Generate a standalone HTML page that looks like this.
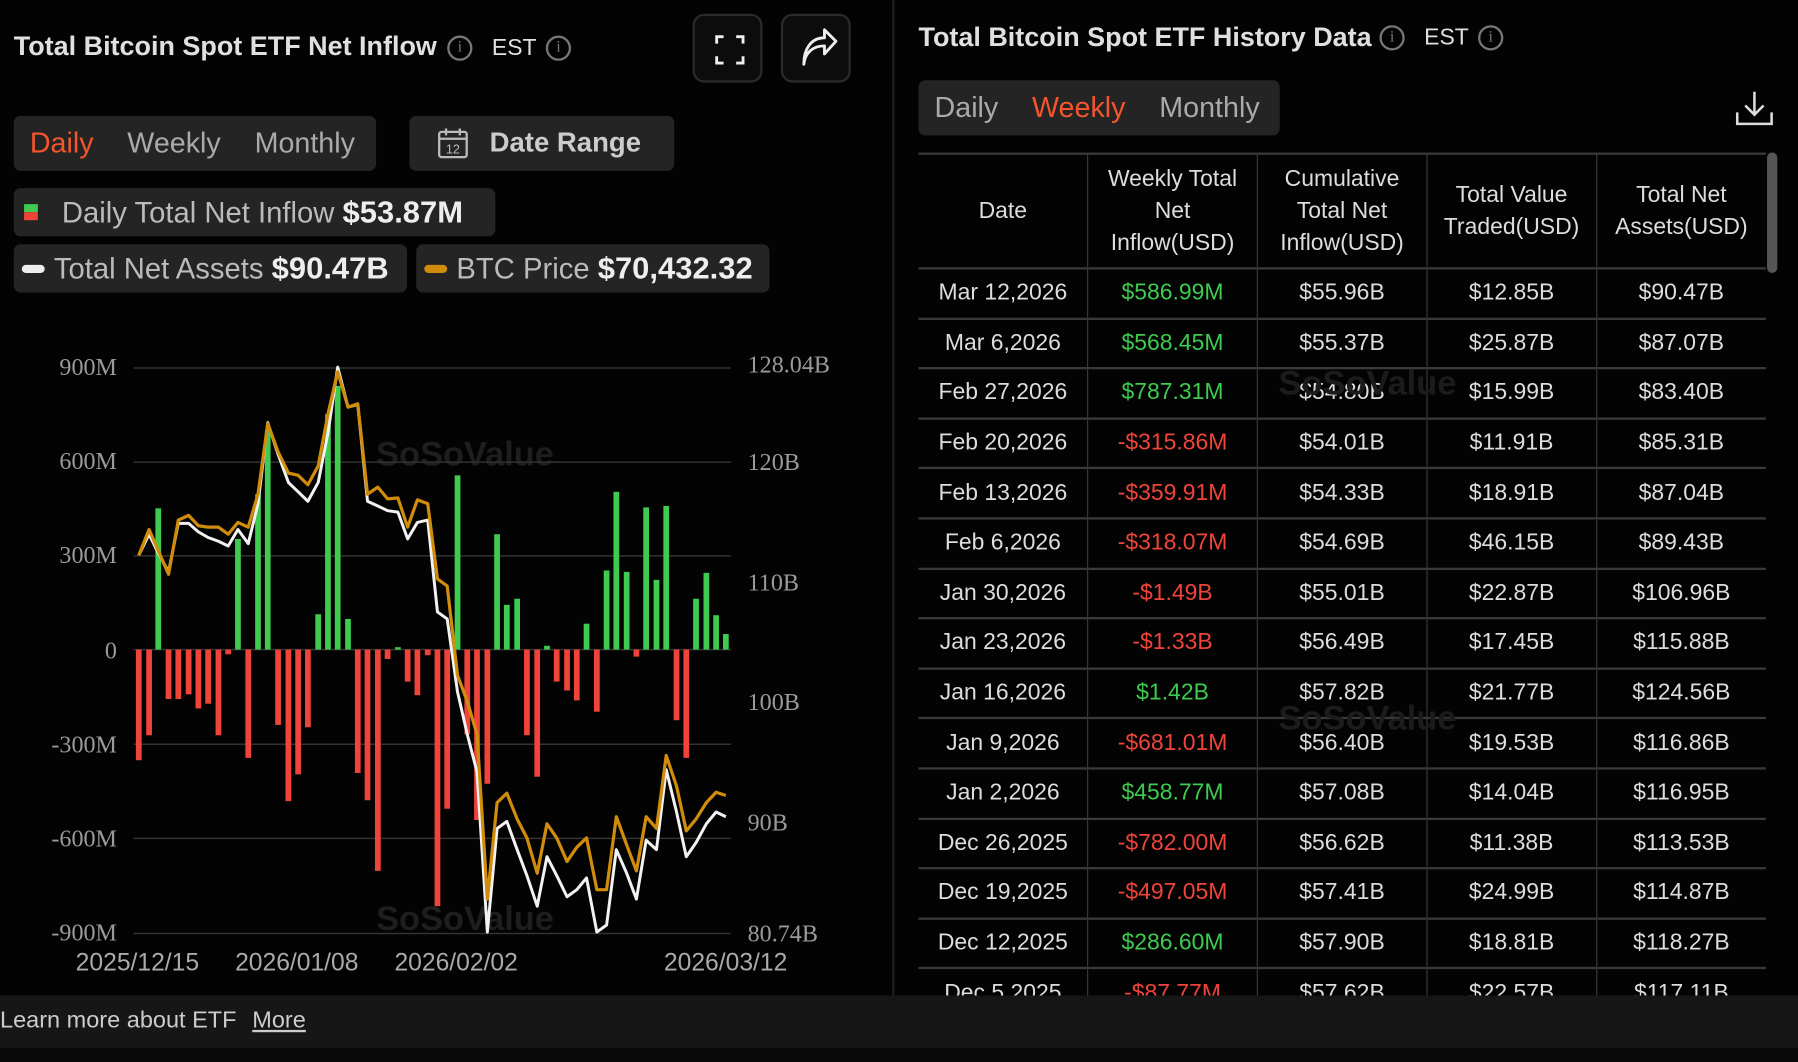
<!DOCTYPE html>
<html><head><meta charset="utf-8"><style>
*{margin:0;padding:0;box-sizing:border-box}
html,body{width:1798px;height:1062px;background:#030303;overflow:hidden}
#w{position:absolute;left:0;top:0;width:1568px;height:926px;transform:scale(1.14668,1.1469);transform-origin:0 0;font-family:"Liberation Sans",sans-serif;color:#ddd}
.a{position:absolute;white-space:nowrap}
.box{position:absolute;background:#242424;border-radius:6px}
.info{position:absolute;width:22px;height:22px;border:2px solid #777;border-radius:50%;color:#777;font-size:14px;text-align:center;line-height:18px;font-family:"Liberation Serif",serif}
.btn{position:absolute;border:2px solid #2a2a2a;border-radius:10px;background:#0c0c0c}
.tab{font-size:25px;color:#aaa}
.ax{position:absolute;font-family:"Liberation Serif",serif;font-size:21px;color:#9a9a9a}
.xl{position:absolute;font-size:21.5px;color:#aaa;top:827px}
table{position:absolute;left:801px;top:133px;border-collapse:collapse;width:739px;font-size:20px}
td,th{border-left:1px solid #3a3a3a;border-right:1px solid #3a3a3a;border-bottom:2px solid #3a3a3a;text-align:center;width:148px;height:43.6px;font-weight:normal;color:#ddd}
th{height:100px;line-height:28px;border-top:2px solid #3a3a3a}
td:first-child,th:first-child{border-left:none}
td:last-child,th:last-child{border-right:none}
.g{color:#3ecb4f}.r{color:#f0443a}
.wm{position:absolute;font-size:30px;font-weight:bold;color:#1e1e1e}
</style></head><body><div id="w">
<div class="a" style="left:12px;top:27px;font-size:23.5px;font-weight:bold;color:#e0e0e0">Total Bitcoin Spot ETF Net Inflow</div>
<div class="info" style="left:390px;top:31px">i</div>
<div class="a" style="left:429px;top:31px;font-size:20px;color:#e0e0e0">EST</div>
<div class="info" style="left:476px;top:31px">i</div>
<div class="btn" style="left:604px;top:12px;width:61px;height:60px"><svg width="61" height="60" viewBox="0 0 61 60"><path d="M19 24v-6h6M36 18h6v6M42 35v6h-6M25 41h-6v-6" stroke="#eee" stroke-width="2.5" fill="none"/></svg></div>
<div class="btn" style="left:681px;top:12px;width:61px;height:60px"><svg width="61" height="60" viewBox="0 0 61 60"><path d="M18 42c1-10 8-16 18-16v7l10-11-10-10v7c-12 0-18 10-18 23z" stroke="#eee" stroke-width="2.5" fill="none" stroke-linejoin="round"/></svg></div>
<div class="box" style="left:12px;top:101px;width:316px;height:48px"></div>
<div class="a tab" style="left:26px;top:111px;color:#f4552c">Daily</div>
<div class="a tab" style="left:111px;top:111px">Weekly</div>
<div class="a tab" style="left:222px;top:111px">Monthly</div>
<div class="box" style="left:357px;top:101px;width:231px;height:48px"></div>
<svg class="a" style="left:380px;top:110px" width="30" height="30" viewBox="0 0 30 30"><rect x="3" y="5" width="24" height="22" rx="2" stroke="#bbb" stroke-width="2" fill="none"/><path d="M3 11h24M9 2v6M21 2v6" stroke="#bbb" stroke-width="2"/><text x="15" y="24" font-size="11" fill="#bbb" text-anchor="middle" font-family="Liberation Sans">12</text></svg>
<div class="a" style="left:427px;top:111px;font-size:24px;font-weight:bold;color:#ccc">Date Range</div>
<div class="box" style="left:12px;top:164px;width:420px;height:42px"></div>
<div class="a" style="left:21px;top:178px;width:12px;height:7px;background:#3ecb4f"></div>
<div class="a" style="left:21px;top:185px;width:12px;height:7px;background:#f0443a"></div>
<div class="a" style="left:54px;top:170px;font-size:25.5px;color:#bbb">Daily Total Net Inflow <b style="color:#eee;font-size:27px">$53.87M</b></div>
<div class="box" style="left:12px;top:213px;width:343px;height:42px"></div>
<div class="a" style="left:19px;top:231px;width:20px;height:7px;border-radius:4px;background:#eee"></div>
<div class="a" style="left:47px;top:219px;font-size:25.5px;color:#bbb">Total Net Assets <b style="color:#eee;font-size:27px">$90.47B</b></div>
<div class="box" style="left:363px;top:213px;width:308px;height:42px"></div>
<div class="a" style="left:370px;top:231px;width:20px;height:7px;border-radius:4px;background:#d08c0a"></div>
<div class="a" style="left:398px;top:219px;font-size:25.5px;color:#bbb">BTC Price <b style="color:#eee;font-size:27px">$70,432.32</b></div>
<div class="ax" style="right:1466px;top:308px">900M</div>
<div class="ax" style="right:1466px;top:390px">600M</div>
<div class="ax" style="right:1466px;top:472px">300M</div>
<div class="ax" style="right:1466px;top:555px">0</div>
<div class="ax" style="right:1466px;top:637px">-300M</div>
<div class="ax" style="right:1466px;top:719px">-600M</div>
<div class="ax" style="right:1466px;top:801px">-900M</div>
<div class="ax" style="left:652px;top:306px">128.04B</div>
<div class="ax" style="left:652px;top:391px">120B</div>
<div class="ax" style="left:652px;top:496px">110B</div>
<div class="ax" style="left:652px;top:600px">100B</div>
<div class="ax" style="left:652px;top:705px">90B</div>
<div class="ax" style="left:652px;top:802px">80.74B</div>
<div class="xl" style="left:66px">2025/12/15</div>
<div class="xl" style="left:205px">2026/01/08</div>
<div class="xl" style="left:344px">2026/02/02</div>
<div class="xl" style="left:579px">2026/03/12</div>
<div class="wm" style="left:328px;top:380px">SoSoValue</div>
<div class="wm" style="left:328px;top:785px">SoSoValue</div>
<svg class="a" style="left:0;top:279px" width="784" height="647" viewBox="0 0 1568 1576" preserveAspectRatio="none">
<g stroke="#333" stroke-width="1.3">
<line x1="233" x2="1275" y1="102" y2="102" vector-effect="non-scaling-stroke"/><line x1="233" x2="1275" y1="302" y2="302" vector-effect="non-scaling-stroke"/><line x1="233" x2="1275" y1="501" y2="501" vector-effect="non-scaling-stroke"/><line x1="233" x2="1275" y1="700" y2="700" vector-effect="non-scaling-stroke"/><line x1="233" x2="1275" y1="901" y2="901" vector-effect="non-scaling-stroke"/><line x1="233" x2="1275" y1="1101" y2="1101" vector-effect="non-scaling-stroke"/><line x1="233" x2="1275" y1="1303" y2="1303" vector-effect="non-scaling-stroke"/></g>
<g id="bars"></g>
<polyline id="wl" fill="none" stroke="#f2f2f2" stroke-width="2.6" vector-effect="non-scaling-stroke" stroke-linejoin="round"/>
<polyline id="gl" fill="none" stroke="#d08c0a" stroke-width="2.8" vector-effect="non-scaling-stroke" stroke-linejoin="round"/>
</svg>
<div class="a" style="left:778px;top:0;width:2px;height:868px;background:#1e1e1e"></div>
<div class="a" style="left:801px;top:19px;font-size:23.5px;font-weight:bold;color:#e0e0e0">Total Bitcoin Spot ETF History Data</div>
<div class="info" style="left:1203px;top:22px">i</div>
<div class="a" style="left:1242px;top:22px;font-size:20px;color:#e0e0e0">EST</div>
<div class="info" style="left:1289px;top:22px">i</div>
<div class="box" style="left:801px;top:70px;width:315px;height:48px"></div>
<div class="a tab" style="left:815px;top:80px">Daily</div>
<div class="a tab" style="left:900px;top:80px;color:#f4552c">Weekly</div>
<div class="a tab" style="left:1011px;top:80px">Monthly</div>
<svg class="a" style="left:1512px;top:78px" width="36" height="32" viewBox="0 0 36 32"><path d="M18 2v20M10 14l8 8 8-8M3 20v10h30V20" stroke="#ddd" stroke-width="2.2" fill="none"/></svg>
<div class="a" style="left:1541px;top:133px;width:9px;height:105px;border-radius:5px;background:#555"></div>
<div style="position:absolute;left:0;top:0;width:1568px;height:868px;overflow:hidden">
<table>
<tr><th>Date</th><th>Weekly Total<br>Net<br>Inflow(USD)</th><th>Cumulative<br>Total Net<br>Inflow(USD)</th><th>Total Value<br>Traded(USD)</th><th>Total Net<br>Assets(USD)</th></tr>
<tr><td>Mar 12,2026</td><td class="g">$586.99M</td><td>$55.96B</td><td>$12.85B</td><td>$90.47B</td></tr>
<tr><td>Mar 6,2026</td><td class="g">$568.45M</td><td>$55.37B</td><td>$25.87B</td><td>$87.07B</td></tr>
<tr><td>Feb 27,2026</td><td class="g">$787.31M</td><td>$54.80B</td><td>$15.99B</td><td>$83.40B</td></tr>
<tr><td>Feb 20,2026</td><td class="r">-$315.86M</td><td>$54.01B</td><td>$11.91B</td><td>$85.31B</td></tr>
<tr><td>Feb 13,2026</td><td class="r">-$359.91M</td><td>$54.33B</td><td>$18.91B</td><td>$87.04B</td></tr>
<tr><td>Feb 6,2026</td><td class="r">-$318.07M</td><td>$54.69B</td><td>$46.15B</td><td>$89.43B</td></tr>
<tr><td>Jan 30,2026</td><td class="r">-$1.49B</td><td>$55.01B</td><td>$22.87B</td><td>$106.96B</td></tr>
<tr><td>Jan 23,2026</td><td class="r">-$1.33B</td><td>$56.49B</td><td>$17.45B</td><td>$115.88B</td></tr>
<tr><td>Jan 16,2026</td><td class="g">$1.42B</td><td>$57.82B</td><td>$21.77B</td><td>$124.56B</td></tr>
<tr><td>Jan 9,2026</td><td class="r">-$681.01M</td><td>$56.40B</td><td>$19.53B</td><td>$116.86B</td></tr>
<tr><td>Jan 2,2026</td><td class="g">$458.77M</td><td>$57.08B</td><td>$14.04B</td><td>$116.95B</td></tr>
<tr><td>Dec 26,2025</td><td class="r">-$782.00M</td><td>$56.62B</td><td>$11.38B</td><td>$113.53B</td></tr>
<tr><td>Dec 19,2025</td><td class="r">-$497.05M</td><td>$57.41B</td><td>$24.99B</td><td>$114.87B</td></tr>
<tr><td>Dec 12,2025</td><td class="g">$286.60M</td><td>$57.90B</td><td>$18.81B</td><td>$118.27B</td></tr>
<tr><td>Dec 5,2025</td><td class="r">-$87.77M</td><td>$57.62B</td><td>$22.57B</td><td>$117.11B</td></tr>
</table>
<div class="wm" style="left:1115px;top:318px;color:#1c1c1c">SoSoValue</div>
<div class="wm" style="left:1115px;top:610px;color:#1c1c1c">SoSoValue</div>
</div>
<div class="a" style="left:0;top:868px;width:1568px;height:46px;background:#161616"></div>
<div class="a" style="left:0;top:878px;font-size:20.5px;color:#ccc">Learn more about ETF</div>
<div class="a" style="left:220px;top:878px;font-size:20.5px;color:#ccc;text-decoration:underline">More</div>
<div class="a" style="left:0;top:914px;width:1568px;height:12px;background:#0a0a0a"></div>
</div>
<script>
var b=[[242,935],[260,882],[276,400],[294,805],[311,805],[329,795],[346,825],[363,815],[381,882],[398,710],[415,465],[433,930],[450,370],[467,235],[485,860],[503,1022],[520,965],[537,865],[555,625],[572,200],[589,140],[607,635],[624,962],[641,1020],[659,1170],[676,720],[694,695],[711,768],[728,797],[746,712],[763,1245],[780,1038],[798,330],[815,880],[832,1062],[850,985],[867,455],[884,605],[902,592],[919,882],[937,970],[954,692],[971,768],[989,787],[1006,808],[1023,645],[1041,832],[1058,532],[1075,365],[1093,535],[1110,715],[1127,398],[1145,552],[1162,395],[1180,850],[1197,930],[1214,592],[1232,537],[1249,627],[1266,667]];
var s='';b.forEach(function(p){var t=Math.min(700,p[1]),h=Math.abs(p[1]-700);s+='<rect x="'+(p[0]-5)+'" y="'+t+'" width="10" height="'+h+'" fill="'+(p[1]<700?'#3ecb4f':'#f0443a')+'"/>';});
document.getElementById('bars').innerHTML=s;
var g=[500,445,490,540,425,415,437,440,440,455,430,440,370,220,280,325,330,350,310,200,110,185,178,370,355,380,378,440,382,390,550,565,755,810,880,1230,1025,1005,1060,1100,1175,1070,1100,1150,1120,1100,1210,1210,1055,1115,1170,1055,1080,925,990,1085,1060,1025,1003,1010];
var w=[500,455,495,535,432,432,450,462,470,480,445,475,390,218,285,345,365,385,345,240,100,185,180,385,395,405,408,465,430,425,620,635,790,880,960,1300,1080,1065,1125,1180,1245,1140,1180,1225,1210,1185,1300,1285,1125,1175,1230,1105,1125,955,1045,1140,1110,1070,1045,1055];
function pts(a){return a.map(function(y,i){return b[i][0]+','+y}).join(' ')}
document.getElementById('wl').setAttribute('points',pts(w));
document.getElementById('gl').setAttribute('points',pts(g));
</script>
</body></html>
